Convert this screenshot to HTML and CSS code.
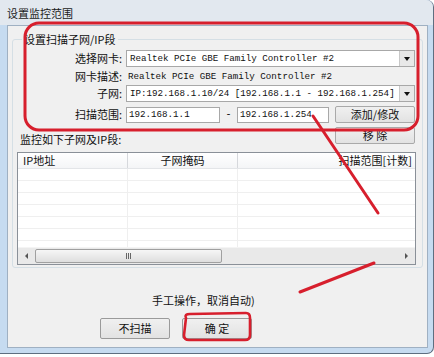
FILE: index.html
```html
<!DOCTYPE html>
<html lang="zh-CN">
<head>
<meta charset="utf-8">
<title>设置监控范围</title>
<link rel="stylesheet" href="styles.css">
</head>
<body>
<div class="window">
  <div class="titlebar"><span class="title">设置监控范围</span></div>
  <div class="frame">
    <div class="client">
      <fieldset class="group">
        <legend class="group-label">设置扫描子网/IP段</legend>
        <div class="row r1">
          <div class="lbl">选择网卡:</div>
          <div class="combo"><span class="mono">Realtek PCIe GBE Family Controller #2</span><span class="drop"><span class="tri"></span></span></div>
        </div>
        <div class="row r2">
          <div class="lbl">网卡描述:</div>
          <div class="plain"><span class="mono">Realtek PCIe GBE Family Controller #2</span></div>
        </div>
        <div class="row r3">
          <div class="lbl">子网:</div>
          <div class="combo"><span class="mono">IP:192.168.1.10/24 [192.168.1.1 - 192.168.1.254]</span><span class="drop"><span class="tri"></span></span></div>
        </div>
        <div class="row r4">
          <div class="lbl">扫描范围:</div>
          <div class="range">
            <div class="edit e1"><span class="mono">192.168.1.1</span></div>
            <div class="dash">-</div>
            <div class="edit e2"><span class="mono">192.168.1.254</span></div>
            <button class="btn side">添加/修改</button>
          </div>
        </div>
        <div class="row r5">
          <div class="list-title">监控如下子网及IP段:</div>
          <button class="btn side">移 除</button>
        </div>
        <div class="listview">
          <div class="lv-head">
            <div class="hc c1">IP地址</div>
            <div class="hc c2">子网掩码</div>
            <div class="hc c3">扫描范围[计数]</div>
          </div>
          <div class="lv-body">
            <div class="lv-row"><div class="c c1"></div><div class="c c2"></div><div class="c c3"></div></div>
            <div class="lv-row"><div class="c c1"></div><div class="c c2"></div><div class="c c3"></div></div>
            <div class="lv-row"><div class="c c1"></div><div class="c c2"></div><div class="c c3"></div></div>
            <div class="lv-row"><div class="c c1"></div><div class="c c2"></div><div class="c c3"></div></div>
            <div class="lv-row"><div class="c c1"></div><div class="c c2"></div><div class="c c3"></div></div>
            <div class="lv-row"><div class="c c1"></div><div class="c c2"></div><div class="c c3"></div></div>
            <div class="lv-row"><div class="c c1"></div><div class="c c2"></div><div class="c c3"></div></div>
          </div>
          <div class="hscroll">
            <div class="sb-arrow"><span class="tri-l"></span></div>
            <div class="sb-thumb"><span class="grip"></span><span class="grip"></span><span class="grip"></span></div>
            <div class="sb-track"></div>
            <div class="sb-arrow"><span class="tri-r"></span></div>
          </div>
        </div>
      </fieldset>
      <div class="status">手工操作，取消自动)</div>
      <div class="buttons">
        <button class="btn dlg">不扫描</button>
        <button class="btn dlg">确 定</button>
      </div>
    </div>
  </div>
  <svg class="annot" width="434" height="357" viewBox="0 0 434 357" xmlns="http://www.w3.org/2000/svg">
    <rect x="25" y="23" width="393" height="107" rx="14" ry="14" fill="none" stroke="#d71f2d" stroke-width="3"/>
    <path d="M186 318 Q184 314 190 314 L246 313 Q250 313 250 318 L250 335 Q250 340 245 340 L189 340 Q184 340 184 335 Z" fill="none" stroke="#d71f2d" stroke-width="2.6"/>
    <line x1="313" y1="116" x2="378" y2="213" stroke="#d71f2d" stroke-width="3" stroke-linecap="round"/>
    <line x1="374" y1="263" x2="300" y2="292" stroke="#d71f2d" stroke-width="3" stroke-linecap="round"/>
  </svg>
</div>
</body>
</html>
```

FILE: styles.css
```css
* { box-sizing: border-box; }
html, body { margin: 0; padding: 0; background: #ffffff; }
body {
  width: 434px;
  height: 357px;
  overflow: hidden;
  font-family: "Noto Sans CJK SC", sans-serif;
  font-size: 11px;
  color: #111;
}
.window {
  position: relative;
  width: 434px;
  height: 354px;
  background: #c6dbf0;
  border-right: 1px solid #5e6e80;
  border-bottom: 1px solid #5e6e80;
  border-radius: 0 7px 7px 0;
  display: flex;
  flex-direction: column;
}
.titlebar {
  height: 25px;
  flex: none;
  background: #e2e8ef;
  border-top-right-radius: 7px;
  display: flex;
  align-items: center;
  padding: 1px 0 0 7px;
}
.title { font-size: 11px; line-height: 13px; color: #1a1a1a; }
.frame {
  flex: 1;
  display: flex;
  padding: 0 5px 5px 7px;
}
.client {
  flex: 1;
  background: #f0f0f0;
  border: 1px solid #9fb0c2;
  display: flex;
  flex-direction: column;
}
.group {
  margin: 7px 0 0 4px;
  width: 411px;
  padding: 4px 6px 2px 4px;
  border: 1px solid #d5dfe5;
  border-radius: 3px;
  min-width: 0;
}
.group-label {
  margin-left: 5px;
  padding: 0 2px;
  line-height: 13px;
  font-size: 11px;
}
.row { display: flex; align-items: center; }
.lbl {
  width: 105px;
  margin-right: 4px;
  text-align: right;
  line-height: 13px;
  flex: none;
}
.r1 { height: 17px; }
.r2 { height: 16px; margin-top: 1px; }
.r3 { height: 17px; margin-top: 1px; }
.r4 { height: 17px; margin-top: 4px; }
.r5 { height: 18px; margin-top: 4px; justify-content: space-between; align-items: flex-start; }
.mono {
  font-family: "Liberation Mono", monospace;
  font-size: 9.2px;
  letter-spacing: 0;
  white-space: nowrap;
}
.combo {
  width: 289px;
  height: 17px;
  background: #fff;
  border: 1px solid #a8a8a8;
  display: flex;
  align-items: center;
  padding-left: 3px;
  justify-content: space-between;
}
.drop {
  width: 15px;
  height: 15px;
  background: #e8e8e8;
  border-left: 1px solid #c8c8c8;
  display: flex;
  align-items: center;
  justify-content: center;
}
.tri {
  width: 0; height: 0;
  border-left: 3.5px solid transparent;
  border-right: 3.5px solid transparent;
  border-top: 4px solid #111;
}
.plain { padding-left: 2px; display: flex; align-items: center; }
.range { display: flex; align-items: center; }
.edit {
  height: 16px;
  background: #fff;
  border: 1px solid #a8a8a8;
  display: flex;
  align-items: center;
  padding-left: 2px;
}
.e1 { width: 94px; }
.e2 { width: 92px; }
.dash { width: 17px; text-align: center; font-family: "Liberation Mono", monospace; font-size: 10px; }
.btn {
  font-family: "Noto Sans CJK SC", sans-serif;
  font-size: 11px;
  line-height: 13px;
  color: #111;
  padding: 0;
  margin: 0;
  background: linear-gradient(#f0f0f0, #e2e2e2);
  border: 1px solid #a9a9a9;
  border-radius: 2px;
}
.side { width: 80px; height: 17px; margin-left: 6px; }
.r5 .side { margin-left: 0; margin-right: 1px; }
.r4 .side { margin-right: 1px; }
.list-title { padding-left: 3px; margin-top: 6px; line-height: 12px; }
.listview {
  margin-top: 7px;
  height: 113px;
  border: 1px solid #8a9098;
  background: #fff;
  display: flex;
  flex-direction: column;
}
.lv-head {
  height: 16px;
  flex: none;
  display: flex;
  background: linear-gradient(#ffffff, #f4f5f7);
  border-bottom: 1px solid #e3e5e8;
}
.hc { line-height: 14px; height: 15px; white-space: nowrap; }
.c1 { width: 110px; flex: none; }
.c2 { width: 110px; flex: none; }
.c3 { flex: 1; }
.hc.c1 { padding-left: 5px; border-right: 1px solid #d6d8dc; }
.hc.c2 { text-align: center; border-right: 1px solid #d6d8dc; }
.hc.c3 { text-align: right; padding-right: 3px; }
.lv-body { flex: 1; overflow: hidden; }
.lv-row { height: 12px; display: flex; border-bottom: 1px solid #efefef; }
.c.c1, .c.c2 { border-right: 1px solid #efefef; }
.hscroll {
  height: 17px;
  flex: none;
  display: flex;
  background: #e9e9e9;
  border-top: 1px solid #f4f4f4;
}
.sb-arrow {
  width: 17px;
  flex: none;
  display: flex;
  align-items: center;
  justify-content: center;
}
.tri-l { width: 0; height: 0; border-top: 3px solid transparent; border-bottom: 3px solid transparent; border-right: 3px solid #555; }
.tri-r { width: 0; height: 0; border-top: 3px solid transparent; border-bottom: 3px solid transparent; border-left: 3px solid #555; }
.sb-thumb {
  width: 187px;
  flex: none;
  margin: 1px 0;
  border: 1px solid #a0a0a0;
  border-radius: 2px;
  background: linear-gradient(#f6f6f6, #dedede);
  display: flex;
  align-items: center;
  justify-content: center;
  gap: 1px;
}
.grip { width: 1px; height: 6px; background: #666; }
.sb-track { flex: 1; }
.status {
  margin-top: 26px;
  padding-left: 144px;
  line-height: 13px;
  white-space: nowrap;
}
.buttons {
  margin-top: 11px;
  padding-left: 92px;
  display: flex;
  gap: 12px;
}
.dlg { width: 70px; height: 21px; border-color: #9a9a9a; }
.annot { position: absolute; left: 0; top: 0; pointer-events: none; }
```
